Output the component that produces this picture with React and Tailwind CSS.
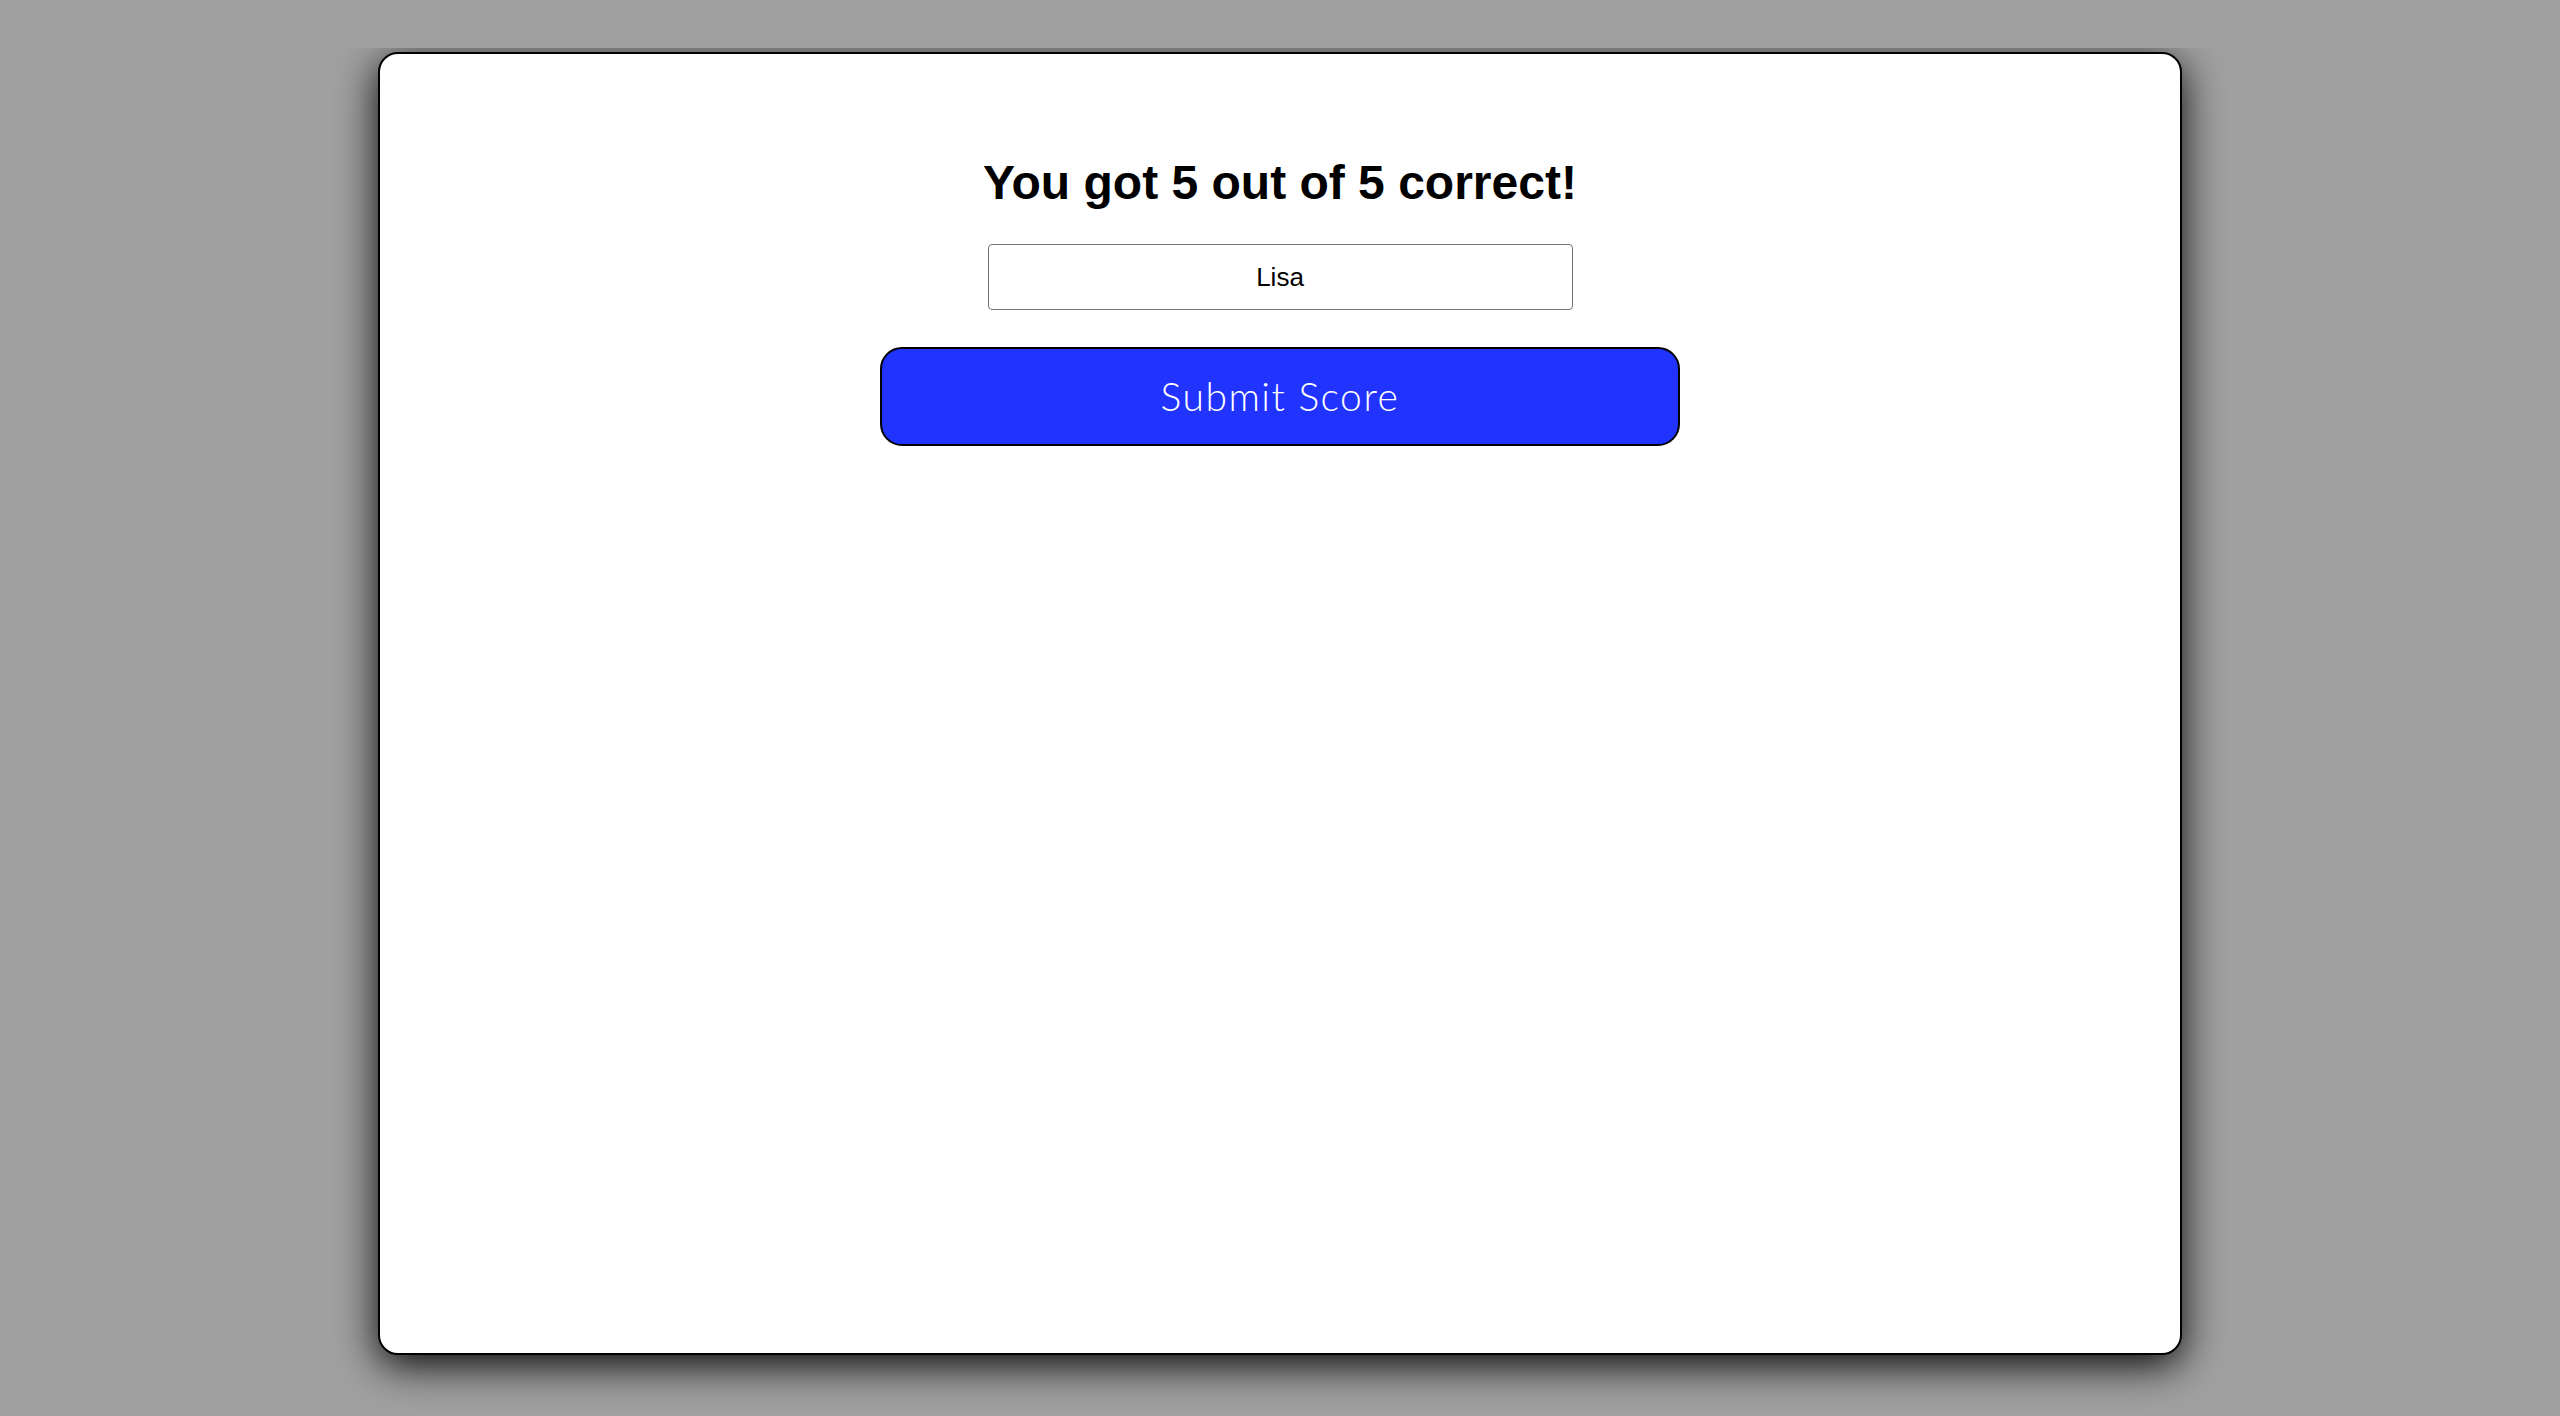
export default function App() {
  return (
    <div className="min-h-[1416px] bg-[#a0a0a0] pt-[48px]">
      <div className="h-[1368px] overflow-hidden pt-[4px]">
        <div className="mx-auto flex h-[1303px] w-[1804px] flex-col items-center rounded-[20px] border-2 border-black bg-white pt-[101px] shadow-[0_10px_40px_rgba(0,0,0,0.95)]">
          <h1 className="text-[48px] font-bold leading-[55px] text-black [font-family:'Liberation_Sans',Arial,sans-serif]">
            You got 5 out of 5 correct!
          </h1>
          <input
            type="text"
            defaultValue="Lisa"
            className="mt-[34px] h-[66px] w-[585px] rounded-[4px] border border-[#767676] bg-white text-center text-[26px] text-black outline-none [font-family:'Liberation_Sans',Arial,sans-serif]"
          />
          <button
            type="button"
            className="mt-[37px] flex h-[99px] w-[800px] items-center justify-center rounded-[22px] border-2 border-black bg-[#2033ff] text-[39px] font-light tracking-[1.5px] text-white [font-family:Lato,'Open_Sans',sans-serif]"
          >
            Submit Score
          </button>
        </div>
      </div>
    </div>
  );
}
